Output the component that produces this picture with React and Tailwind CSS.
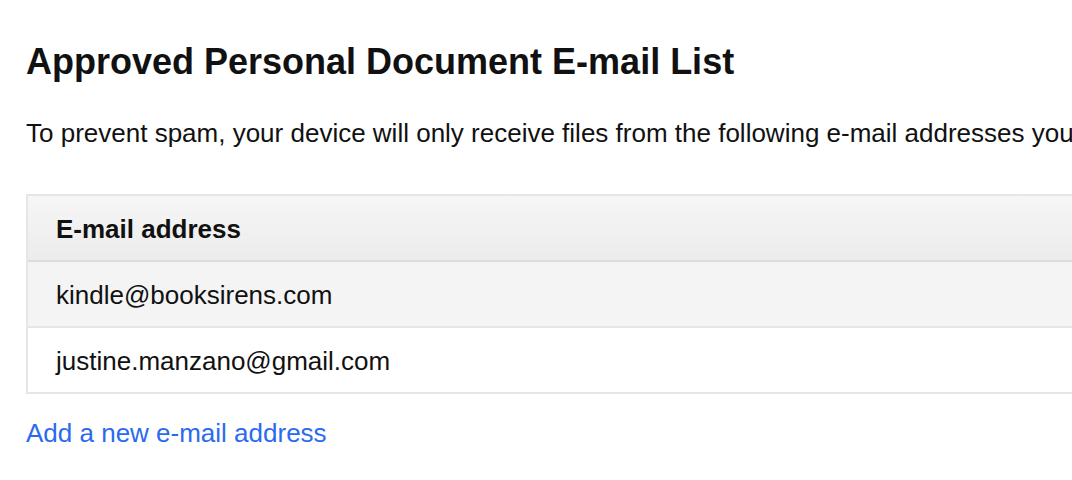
export default function App() {
  const font = { fontFamily: '"Liberation Sans", Arial, sans-serif' };
  return (
    <div className="w-[1072px] h-[480px] overflow-hidden bg-white" style={font}>
      <div className="w-[1300px] pl-[26px] text-[#111111]">
        <h1 className="pt-[42px] text-[36px] leading-[40px] font-bold">
          Approved Personal Document E-mail List
        </h1>
        <p className="mt-[35px] text-[26px] leading-[32px] whitespace-nowrap">
          To prevent spam, your device will only receive files from the following e-mail addresses you have approved.
        </p>
        <div className="mt-[45px] w-[1200px] border-2 border-[#e6e6e6]">
          <div className="border-b-2 border-[#dcdcdc] bg-gradient-to-b from-[#f6f6f6] to-[#ececec] px-[28px] pt-[17px] pb-[15px] text-[26px] leading-[32px] font-bold">
            E-mail address
          </div>
          <div className="border-b-2 border-[#e6e6e6] bg-[#f4f4f4] px-[28px] pt-[17px] pb-[15px] text-[26px] leading-[32px]">
            kindle@booksirens.com
          </div>
          <div className="bg-white px-[28px] pt-[17px] pb-[15px] text-[26px] leading-[32px]">
            justine.manzano@gmail.com
          </div>
        </div>
        <a href="#" className="mt-[23px] block text-[26px] leading-[32px] text-[#2a6af0]">
          Add a new e-mail address
        </a>
      </div>
    </div>
  );
}
